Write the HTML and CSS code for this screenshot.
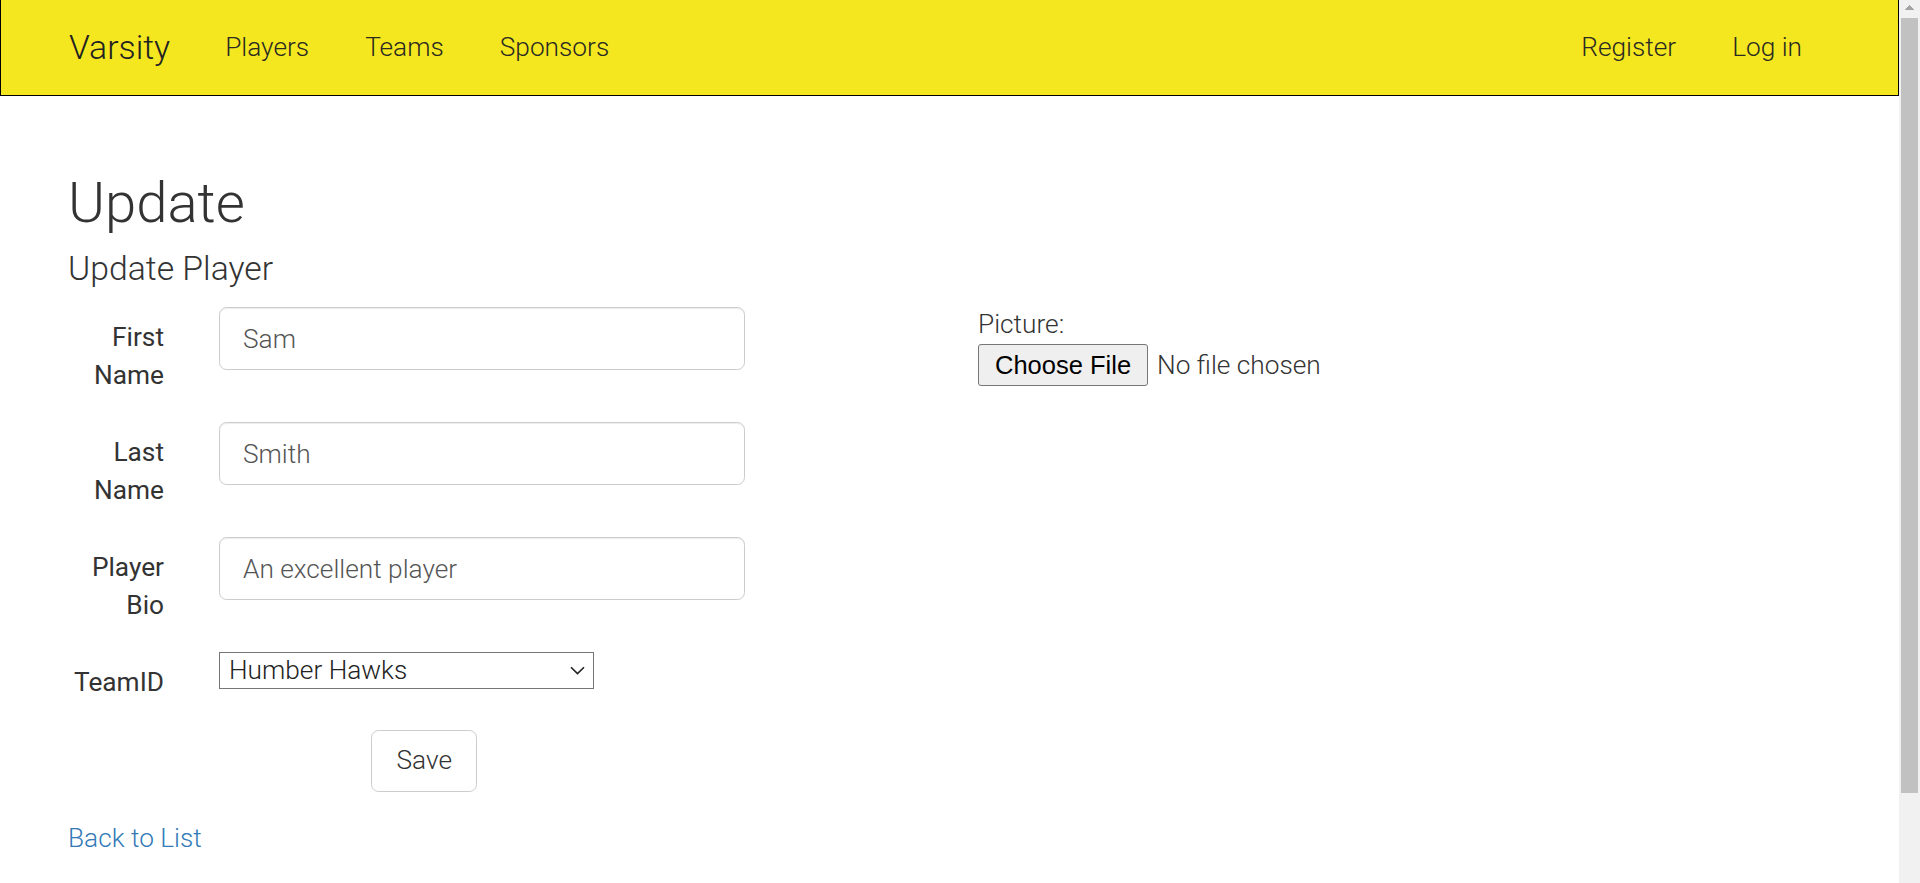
FILE: index.html
```html
<!DOCTYPE html>
<html lang="en">
<head>
<meta charset="utf-8">
<title>Update - Varsity</title>
<link rel="stylesheet" href="styles.css">
</head>
<body>
<div class="page">
  <nav class="navbar">
    <a class="brand" href="#">Varsity</a>
    <ul class="nav-links">
      <li><a href="#">Players</a></li>
      <li><a href="#">Teams</a></li>
      <li><a href="#">Sponsors</a></li>
    </ul>
    <ul class="nav-links nav-right">
      <li><a href="#">Register</a></li>
      <li><a href="#">Log in</a></li>
    </ul>
  </nav>
  <main class="container">
    <h2 class="title">Update</h2>
    <h4 class="subtitle">Update Player</h4>
    <form class="form-layout">
      <div class="fields">
        <div class="form-group">
          <label for="fn">First Name</label>
          <input id="fn" class="form-control" type="text" value="Sam">
        </div>
        <div class="form-group">
          <label for="ln">Last Name</label>
          <input id="ln" class="form-control" type="text" value="Smith">
        </div>
        <div class="form-group">
          <label for="bio">Player Bio</label>
          <input id="bio" class="form-control" type="text" value="An excellent player">
        </div>
        <div class="form-group">
          <label for="team">TeamID</label>
          <div class="select-wrap">
            <select id="team" class="select">
              <option>Humber Hawks</option>
            </select>
            <svg class="chevron" width="15" height="9" viewBox="0 0 15 9"><path d="M1 1.2 L7.5 7.6 L14 1.2" fill="none" stroke="#222" stroke-width="1.6"/></svg>
          </div>
        </div>
        <div class="actions">
          <button type="submit" class="btn">Save</button>
        </div>
      </div>
      <div class="picture">
        <label for="pic">Picture:</label>
        <input id="pic" class="file" type="file">
      </div>
    </form>
    <div class="back"><a href="#">Back to List</a></div>
  </main>
</div>
<div class="scrollbar" aria-hidden="true">
  <div class="sb-up"></div>
  <div class="sb-thumb"></div>
</div>
</body>
</html>
```
FILE: styles.css
```css
body {
  display: flex;
  align-items: flex-start;
  margin: 0;
  font-family: Roboto, "Noto Sans", sans-serif;
  font-weight: 300;
  font-size: 26.25px;
  line-height: 1.42857;
  color: #333;
  background: #fff;
}

.page {
  flex: 1;
  min-width: 0;
}

.scrollbar {
  flex: none;
  display: flex;
  flex-direction: column;
  width: 21px;
  height: 100vh;
  position: sticky;
  top: 0;
  background: #f1f1f1;
}

.sb-up {
  height: 18px;
  background-image: linear-gradient(to bottom right, transparent 50%, #a3a3a3 50%),
                    linear-gradient(to bottom left, transparent 50%, #a3a3a3 50%);
  background-size: 5px 5px, 5px 5px;
  background-position: 5.5px 5px, 10.5px 5px;
  background-repeat: no-repeat;
}

.sb-thumb {
  height: 775px;
  margin: 0 2px;
  background: #c1c1c1;
}

a {
  text-decoration: none;
}

.navbar {
  display: flex;
  align-items: center;
  box-sizing: border-box;
  height: 96px;
  padding: 1px 96px 0 68px;
  background: #f5e71f;
  border: 1px solid #000;
  border-top: 0;
}

.brand {
  font-size: 33.75px;
  color: #222;
  margin-right: 55px;
}

.nav-links {
  display: flex;
  gap: 56px;
  list-style: none;
  margin: 0;
  padding: 0;
}

.nav-links a {
  color: #2a2a22;
}

.nav-right {
  margin-left: auto;
}

.container {
  padding: 0 68px 40px;
}

.title {
  font-size: 56.25px;
  font-weight: 300;
  line-height: 1.1;
  margin: 76.5px 0 0;
}

.subtitle {
  font-size: 33.75px;
  font-weight: 300;
  line-height: 1.1;
  margin: 16px 0 19.5px;
}

.form-layout {
  display: grid;
  grid-template-columns: 910px 1fr;
}

.form-group {
  display: flex;
  align-items: flex-start;
  margin-bottom: 28px;
}

.form-group label {
  flex: none;
  width: 96px;
  margin-right: 55px;
  padding-top: 12px;
  text-align: right;
  line-height: 37.5px;
  font-weight: 400;
  color: #333;
}

.form-control {
  box-sizing: border-box;
  width: 526px;
  height: 63px;
  padding: 10px 23px;
  border: 1px solid #ccc;
  border-radius: 7.5px;
  font: inherit;
  color: #555;
  box-shadow: inset 0 1px 1px rgba(0, 0, 0, 0.075);
}

.select-wrap {
  position: relative;
  width: 375px;
  height: 37px;
}

.select {
  -webkit-appearance: none;
  appearance: none;
  box-sizing: border-box;
  width: 100%;
  height: 37px;
  margin: 0;
  padding: 0 9px;
  border: 1px solid #767676;
  border-radius: 0;
  background: #fff;
  font: inherit;
  line-height: 35px;
  color: #222;
}

.chevron {
  position: absolute;
  right: 9px;
  top: 14px;
  pointer-events: none;
}

.actions {
  padding-left: 303px;
}

.btn {
  box-sizing: border-box;
  height: 62px;
  font: inherit;
  line-height: 37.5px;
  padding: 0 24.5px;
  border: 1px solid #ccc;
  border-radius: 7.5px;
  background: #fff;
  color: #333;
}

.picture label {
  display: block;
  line-height: 35px;
  margin-bottom: 2px;
}

.file {
  font: inherit;
  color: #333;
}

.file::file-selector-button {
  font-family: "Liberation Sans", Arial, sans-serif;
  font-size: 25.5px;
  font-weight: 400;
  color: #000;
  height: 42px;
  padding: 0 16px;
  margin-right: 9px;
  border: 1px solid #767676;
  border-radius: 3px;
  background: #efefef;
}

.back {
  margin-top: 28px;
}

.back a {
  color: #337ab7;
}
```
